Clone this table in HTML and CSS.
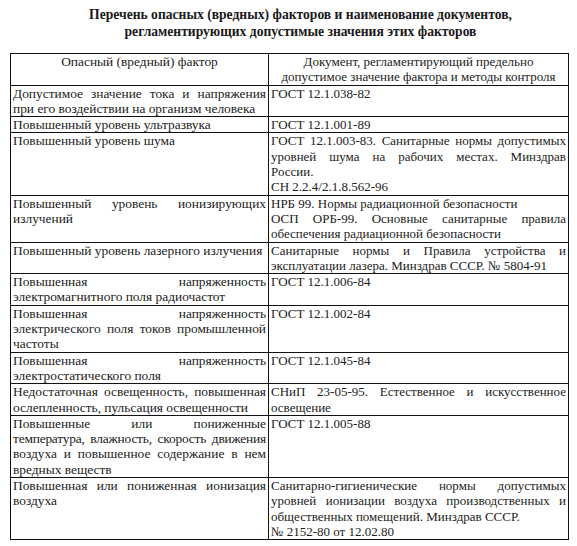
FILE: index.html
```html
<!DOCTYPE html>
<html lang="ru">
<head>
<meta charset="utf-8">
<title>Перечень опасных факторов</title>
<link rel="stylesheet" href="styles.css">
</head>
<body>
<div class="page">
  <h1 class="title">Перечень опасных (вредных) факторов и наименование документов,<br>регламентирующих допустимые значения этих факторов</h1>
  <table class="factors">
    <colgroup><col class="c1"><col class="c2"></colgroup>
    <thead>
      <tr>
        <th class="left">Опасный (вредный) фактор</th>
        <th class="right"><span class="ln">Документ, регламентирующий предельно</span><span class="ln">допустимое значение фактора и методы контроля</span></th>
      </tr>
    </thead>
    <tbody>
      <tr>
        <td class="left"><span class="ln j">Допустимое значение тока и напряжения</span><span class="ln">при его воздействии на организм человека</span></td>
        <td class="right"><span class="ln">ГОСТ 12.1.038-82</span></td>
      </tr>
      <tr>
        <td class="left"><span class="ln">Повышенный уровень ультразвука</span></td>
        <td class="right"><span class="ln">ГОСТ 12.1.001-89</span></td>
      </tr>
      <tr>
        <td class="left"><span class="ln">Повышенный уровень шума</span></td>
        <td class="right"><span class="ln j">ГОСТ 12.1.003-83. Санитарные нормы допустимых</span><span class="ln j">уровней шума на рабочих местах. Минздрав</span><span class="ln">России.</span><span class="ln">СН 2.2.4/2.1.8.562-96</span></td>
      </tr>
      <tr>
        <td class="left"><span class="ln j">Повышенный уровень ионизирующих</span><span class="ln">излучений</span></td>
        <td class="right"><span class="ln">НРБ 99. Нормы радиационной безопасности</span><span class="ln j">ОСП ОРБ-99. Основные санитарные правила</span><span class="ln">обеспечения радиационной безопасности</span></td>
      </tr>
      <tr>
        <td class="left"><span class="ln">Повышенный уровень лазерного излучения</span></td>
        <td class="right"><span class="ln j">Санитарные нормы и Правила устройства и</span><span class="ln">эксплуатации лазера. Минздрав СССР. № 5804-91</span></td>
      </tr>
      <tr>
        <td class="left"><span class="ln j">Повышенная напряженность</span><span class="ln">электромагнитного поля радиочастот</span></td>
        <td class="right"><span class="ln">ГОСТ 12.1.006-84</span></td>
      </tr>
      <tr>
        <td class="left"><span class="ln j">Повышенная напряженность</span><span class="ln j">электрического поля токов промышленной</span><span class="ln">частоты</span></td>
        <td class="right"><span class="ln">ГОСТ 12.1.002-84</span></td>
      </tr>
      <tr>
        <td class="left"><span class="ln j">Повышенная напряженность</span><span class="ln">электростатического поля</span></td>
        <td class="right"><span class="ln">ГОСТ 12.1.045-84</span></td>
      </tr>
      <tr>
        <td class="left"><span class="ln j">Недостаточная освещенность, повышенная</span><span class="ln">ослепленность, пульсация освещенности</span></td>
        <td class="right"><span class="ln j">СНиП 23-05-95. Естественное и искусственное</span><span class="ln">освещение</span></td>
      </tr>
      <tr>
        <td class="left"><span class="ln j">Повышенные или пониженные</span><span class="ln j tight">температура, влажность, скорость движения</span><span class="ln j">воздуха и повышенное содержание в нем</span><span class="ln">вредных веществ</span></td>
        <td class="right"><span class="ln">ГОСТ 12.1.005-88</span></td>
      </tr>
      <tr>
        <td class="left"><span class="ln j">Повышенная или пониженная ионизация</span><span class="ln">воздуха</span></td>
        <td class="right"><span class="ln j">Санитарно-гигиенические нормы допустимых</span><span class="ln j">уровней ионизации воздуха производственных и</span><span class="ln">общественных помещений. Минздрав СССР.</span><span class="ln">№ 2152-80 от 12.02.80</span></td>
      </tr>
    </tbody>
  </table>
</div>
</body>
</html>
```
FILE: styles.css
```css
html, body {
  margin: 0;
  padding: 0;
  background: #fff;
}
.page {
  padding: 6px 8px 0 10px;
  font-family: "Liberation Serif", "Times New Roman", serif;
  color: #222;
}
.title {
  margin: 0 0 13px 0;
  padding-left: 22px;
  font-family: "Liberation Serif", "Times New Roman", serif;
  font-size: 13.6px;
  line-height: 17px;
  font-weight: bold;
  text-align: center;
  color: #1a1a1a;
}
.factors {
  width: 559px;
  border-collapse: collapse;
  table-layout: fixed;
  font-family: "Liberation Serif", "Times New Roman", serif;
  line-height: 15.3px;
}
.c1 { width: 258px; }
.factors th, .factors td {
  border: 1px solid #111;
  padding: 0 2px;
  vertical-align: top;
  font-family: "Liberation Serif", "Times New Roman", serif;
  font-weight: normal;
  color: #222;
}
.factors .left { font-size: 13.4px; }
.factors .right { font-size: 13px; }
.factors th {
  text-align: center;
  padding-top: 0;
}
.ln {
  display: block;
  white-space: nowrap;
}
.j {
  text-align: justify;
  text-align-last: justify;
}
.tight { letter-spacing: -0.2px; }
```
